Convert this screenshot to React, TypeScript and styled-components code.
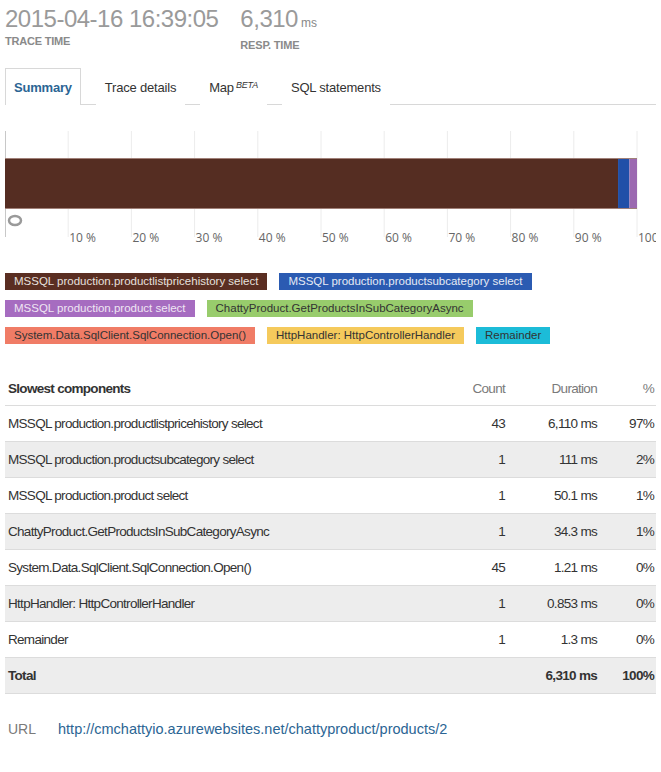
import styled, { createGlobalStyle } from "styled-components";

const GlobalStyle = createGlobalStyle`
	body {
		margin: 0;
		background: #fff;
		font-family: "Liberation Sans", Arial, sans-serif;
		color: #333;
	}
`;

const Page = styled.div`
	width: 661px;
	padding: 0 5px 0 5px;
	box-sizing: border-box;
`;

const Header = styled.div`
	display: flex;
	gap: 22px;
	padding-top: 4px;
	height: 67px;
	box-sizing: border-box;
`;

const Stat = styled.div`
	display: flex;
	flex-direction: column;
`;

const StatValue = styled.div`
	font-size: 24px;
	letter-spacing: -0.5px;
	line-height: 30px;
	color: #9a9a9a;
	font-weight: 300;
`;

const Unit = styled.span`
	font-size: 12px;
	letter-spacing: 0;
	margin-left: 3px;
	color: #888;
`;

const StatLabel = styled.div`
	font-size: 11px;
	font-weight: bold;
	color: #8a8a8a;
	line-height: 14px;
	letter-spacing: -0.2px;
`;

const Tabs = styled.div`
	display: flex;
	align-items: flex-end;
	height: 37px;
	border-bottom: 1px solid #d8d8d8;
`;

const Tab = styled.div<{ $active?: boolean }>`
	height: 36px;
	display: flex;
	align-items: center;
	padding: 0 8px;
	margin-right: 15px;
	font-size: 13px;
	letter-spacing: -0.2px;
	color: ${(p) => (p.$active ? "#2b6594" : "#333")};
	font-weight: ${(p) => (p.$active ? "bold" : "normal")};
	border: 1px solid ${(p) => (p.$active ? "#d8d8d8" : "transparent")};
	border-bottom: none;
	margin-bottom: -1px;
	background: #fff;
`;

const Beta = styled.sup`
	font-size: 9px;
	font-style: italic;
	margin-left: 2px;
	position: relative;
	top: -2px;
`;

const ChartWrap = styled.div`
	margin-top: 26px;
	height: 142px;
`;

const Legend = styled.div`
	display: flex;
	flex-direction: column;
	gap: 10px;
`;

const LegendRow = styled.div`
	display: flex;
	gap: 12px;
`;

const LegendItem = styled.div<{ $bg: string; $fg: string }>`
	height: 17px;
	line-height: 17px;
	padding: 0 9px;
	font-size: 11.5px;
	background: ${(p) => p.$bg};
	color: ${(p) => p.$fg};
	white-space: nowrap;
`;

const Table = styled.div`
	margin-top: 27px;
	width: 651px;
`;

const Row = styled.div<{ $shade?: boolean; $head?: boolean; $bold?: boolean }>`
	display: grid;
	grid-template-columns: 1fr 80px 92px 57px;
	align-items: center;
	height: ${(p) => (p.$head ? "34px" : "35px")};
	border-bottom: 1px solid #dcdcdc;
	background: ${(p) => (p.$shade ? "#ededed" : "#fff")};
	font-size: 13.5px;
	letter-spacing: -0.7px;
	font-weight: ${(p) => (p.$bold ? "bold" : "normal")};
`;

const NameCell = styled.div<{ $head?: boolean }>`
	padding-left: 3px;
	font-weight: ${(p) => (p.$head ? "bold" : "inherit")};
	color: #333;
`;

const NumCell = styled.div<{ $head?: boolean }>`
	text-align: right;
	padding-right: 2px;
	color: ${(p) => (p.$head ? "#7a7a7a" : "#333")};
`;

const UrlRow = styled.div`
	display: flex;
	margin-top: 27px;
	padding-left: 3px;
	font-size: 14px;
	gap: 22px;
`;

const UrlLabel = styled.span`
	color: #7a7a7a;
`;

const UrlLink = styled.a`
	color: #2b6594;
	font-size: 14.5px;
	text-decoration: none;
`;

const segments = [
	{ color: "#552d22", pct: 97.0 },
	{ color: "#2150a8", pct: 1.8 },
	{ color: "#9b69b0", pct: 1.2 },
];

const Chart = () => {
	const step = 63.2;
	const barY = 27;
	const barH = 51;
	let x = 0;
	return (
		<svg width="651" height="142" viewBox="0 0 651 142">
			{Array.from({ length: 10 }, (_, i) => (
				<line key={i} x1={(i + 1) * step} x2={(i + 1) * step} y1={0} y2={106} stroke="#ececec" strokeWidth="1" />
			))}
			<line x1={0.5} x2={0.5} y1={0} y2={106} stroke="#c8c8c8" strokeWidth="1" />
			{segments.map((s, i) => {
				const w = (s.pct / 100) * step * 10;
				const r = <rect key={i} x={x} y={barY} width={w} height={barH} fill={s.color} />;
				x += w;
				return r;
			})}
			<line x1={0} x2={x} y1={barY + 0.5} y2={barY + 0.5} stroke="#a08078" strokeWidth="1" />
			<line x1={0} x2={x} y1={barY + barH - 0.5} y2={barY + barH - 0.5} stroke="#a08078" strokeWidth="1" />
			<ellipse cx={10} cy={89.5} rx={6} ry={4.5} fill="#fff" stroke="#9a9a9a" strokeWidth="2.5" />
			{Array.from({ length: 10 }, (_, i) => (
				<text
					key={i}
					x={(i + 1) * step + 1}
					y={111}
					fontSize="12"
					fill="#666"
					fontFamily='"Open Sans", sans-serif'
				>
					{(i + 1) * 10} %
				</text>
			))}
		</svg>
	);
};

const legendRows = [
	[
		{ label: "MSSQL production.productlistpricehistory select", bg: "#5a2e22", fg: "#e6e0de" },
		{ label: "MSSQL production.productsubcategory select", bg: "#2b5bb2", fg: "#e6eaf4" },
	],
	[
		{ label: "MSSQL production.product select", bg: "#a66cc0", fg: "#efe6f3" },
		{ label: "ChattyProduct.GetProductsInSubCategoryAsync", bg: "#98cc6c", fg: "#333" },
	],
	[
		{ label: "System.Data.SqlClient.SqlConnection.Open()", bg: "#f07c66", fg: "#333" },
		{ label: "HttpHandler: HttpControllerHandler", bg: "#f5ca5c", fg: "#333" },
		{ label: "Remainder", bg: "#1cbcd8", fg: "#333" },
	],
];

const rows = [
	{ name: "MSSQL production.productlistpricehistory select", count: "43", dur: "6,110 ms", pct: "97%" },
	{ name: "MSSQL production.productsubcategory select", count: "1", dur: "111 ms", pct: "2%" },
	{ name: "MSSQL production.product select", count: "1", dur: "50.1 ms", pct: "1%" },
	{ name: "ChattyProduct.GetProductsInSubCategoryAsync", count: "1", dur: "34.3 ms", pct: "1%" },
	{ name: "System.Data.SqlClient.SqlConnection.Open()", count: "45", dur: "1.21 ms", pct: "0%" },
	{ name: "HttpHandler: HttpControllerHandler", count: "1", dur: "0.853 ms", pct: "0%" },
	{ name: "Remainder", count: "1", dur: "1.3 ms", pct: "0%" },
];

const App = () => {
	return (
		<Page>
			<GlobalStyle />
			<Header>
				<Stat>
					<StatValue>2015-04-16 16:39:05</StatValue>
					<StatLabel>TRACE TIME</StatLabel>
				</Stat>
				<Stat>
					<StatValue>
						6,310<Unit>ms</Unit>
					</StatValue>
					<StatLabel>RESP. TIME</StatLabel>
				</Stat>
			</Header>
			<Tabs>
				<Tab $active>Summary</Tab>
				<Tab>Trace details</Tab>
				<Tab>
					Map<Beta>BETA</Beta>
				</Tab>
				<Tab>SQL statements</Tab>
			</Tabs>
			<ChartWrap>
				<Chart />
			</ChartWrap>
			<Legend>
				{legendRows.map((r, i) => (
					<LegendRow key={i}>
						{r.map((l) => (
							<LegendItem key={l.label} $bg={l.bg} $fg={l.fg}>
								{l.label}
							</LegendItem>
						))}
					</LegendRow>
				))}
			</Legend>
			<Table>
				<Row $head>
					<NameCell $head>Slowest components</NameCell>
					<NumCell $head>Count</NumCell>
					<NumCell $head>Duration</NumCell>
					<NumCell $head>%</NumCell>
				</Row>
				{rows.map((r, i) => (
					<Row key={r.name} $shade={i % 2 === 1}>
						<NameCell>{r.name}</NameCell>
						<NumCell>{r.count}</NumCell>
						<NumCell>{r.dur}</NumCell>
						<NumCell>{r.pct}</NumCell>
					</Row>
				))}
				<Row $shade $bold>
					<NameCell>Total</NameCell>
					<NumCell></NumCell>
					<NumCell>6,310 ms</NumCell>
					<NumCell>100%</NumCell>
				</Row>
			</Table>
			<UrlRow>
				<UrlLabel>URL</UrlLabel>
				<UrlLink href="#">http://cmchattyio.azurewebsites.net/chattyproduct/products/2</UrlLink>
			</UrlRow>
		</Page>
	);
};

export default App;
